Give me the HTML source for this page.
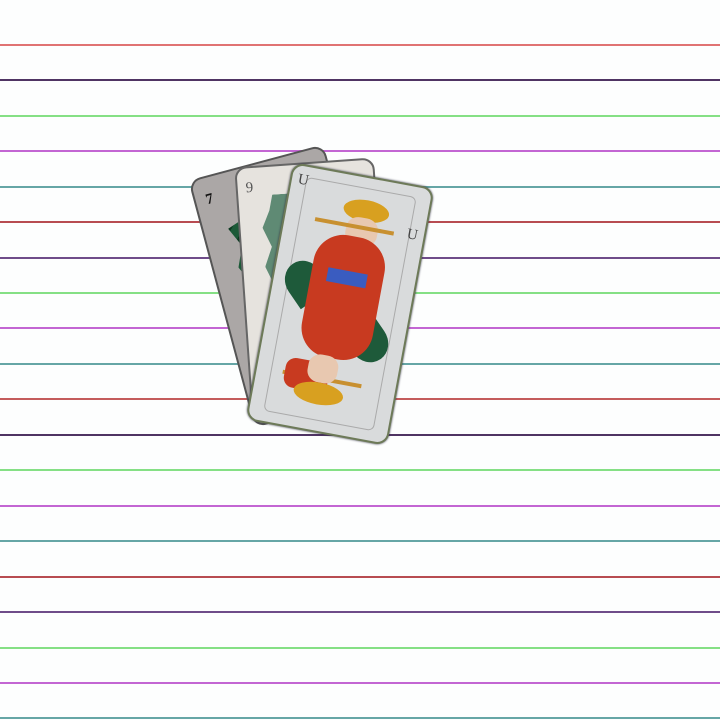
<!DOCTYPE html>
<html><head><style>
html,body{margin:0;padding:0;width:720px;height:720px;overflow:hidden;background:#fdfefe;position:relative}
.l{position:absolute;left:0;width:720px;height:2px}
.card{position:absolute;width:140px;height:256px;border-radius:12px;box-sizing:border-box}
.t{position:absolute;font-family:"Liberation Serif",serif;font-size:15px}
</style></head><body>
<div class="l" style="top:44px;background:#e07373"></div>
<div class="l" style="top:79px;background:#4f3463"></div>
<div class="l" style="top:115px;background:#85e085"></div>
<div class="l" style="top:150px;background:#c366d3"></div>
<div class="l" style="top:186px;background:#66a6a6"></div>
<div class="l" style="top:221px;background:#b84c52"></div>
<div class="l" style="top:257px;background:#6f4c8a"></div>
<div class="l" style="top:292px;background:#85e085"></div>
<div class="l" style="top:327px;background:#c366d3"></div>
<div class="l" style="top:363px;background:#66a6a6"></div>
<div class="l" style="top:398px;background:#c45c5c"></div>
<div class="l" style="top:434px;background:#4f3463"></div>
<div class="l" style="top:469px;background:#85e085"></div>
<div class="l" style="top:505px;background:#c366d3"></div>
<div class="l" style="top:540px;background:#66a6a6"></div>
<div class="l" style="top:576px;background:#b84c52"></div>
<div class="l" style="top:611px;background:#6f4c8a"></div>
<div class="l" style="top:647px;background:#85e085"></div>
<div class="l" style="top:682px;background:#c366d3"></div>
<div class="l" style="top:717px;background:#66a6a6"></div>

<div class="card" style="left:219px;top:158px;background:#aba7a6;border:2px solid #555;transform:rotate(-15deg)">
 <div class="t" style="left:10px;top:14px;color:#111;font-weight:bold">7</div>
 <div style="position:absolute;left:24px;top:45px;width:30px;height:100px;background:repeating-linear-gradient(135deg,#0d3a22 0 10px,#1c5a38 10px 20px);clip-path:polygon(0 10%,100% 0,100% 100%,0 90%,30% 70%,0 50%,30% 30%)"></div>
</div>
<div class="card" style="left:243px;top:162px;background:#e6e3de;border:2px solid #666;transform:rotate(-4deg)">
 <div class="t" style="left:8px;top:12px;color:#555">9</div>
 <div style="position:absolute;left:22px;top:28px;width:40px;height:130px;background:#5f8a74;clip-path:polygon(30% 0,100% 0,100% 100%,20% 100%,0 85%,20% 70%,0 55%,20% 40%,0 25%,20% 12%)"></div>
</div>
<div class="card" style="left:268px;top:173px;width:144px;height:262px;background:#d9dbdc;border:2px solid #6d7a58;transform:rotate(10.5deg);box-shadow:0 0 2px #334">
 <div style="position:absolute;left:14px;top:10px;right:14px;bottom:10px;border:1px solid #aaa;border-radius:6px"></div>
 <div class="t" style="left:6px;top:6px;color:#444">U</div>
 <div class="t" style="right:6px;top:40px;color:#444">U</div>
 <div style="position:absolute;left:12px;top:92px;width:38px;height:42px;background:#1e5a3a;border-radius:50% 50% 50% 0;transform:rotate(-45deg)"></div>
 <div style="position:absolute;right:16px;top:140px;width:38px;height:42px;background:#1e5a3a;border-radius:50% 50% 50% 0;transform:rotate(135deg)"></div>
 <div style="position:absolute;left:56px;top:22px;width:46px;height:22px;background:#d8a020;border-radius:50%"></div>
 <div style="position:absolute;left:62px;top:40px;width:32px;height:28px;background:#e8c8b0;border-radius:40%"></div>
 <div style="position:absolute;left:36px;top:60px;width:72px;height:124px;background:#c83a20;border-radius:30px"></div>
 <div style="position:absolute;left:52px;top:95px;width:40px;height:14px;background:#3a5cc0"></div>
 <div style="position:absolute;left:30px;top:48px;width:80px;height:4px;background:#c89030"></div>
 <div style="position:absolute;left:26px;top:204px;width:80px;height:4px;background:#c89030"></div>
 <div style="position:absolute;left:28px;top:190px;width:44px;height:30px;background:#c83a20;border-radius:10px"></div>
 <div style="position:absolute;left:50px;top:182px;width:30px;height:28px;background:#e8c8b0;border-radius:40%"></div>
 <div style="position:absolute;left:40px;top:210px;width:50px;height:22px;background:#d8a020;border-radius:50%"></div>
</div>
</body></html>
